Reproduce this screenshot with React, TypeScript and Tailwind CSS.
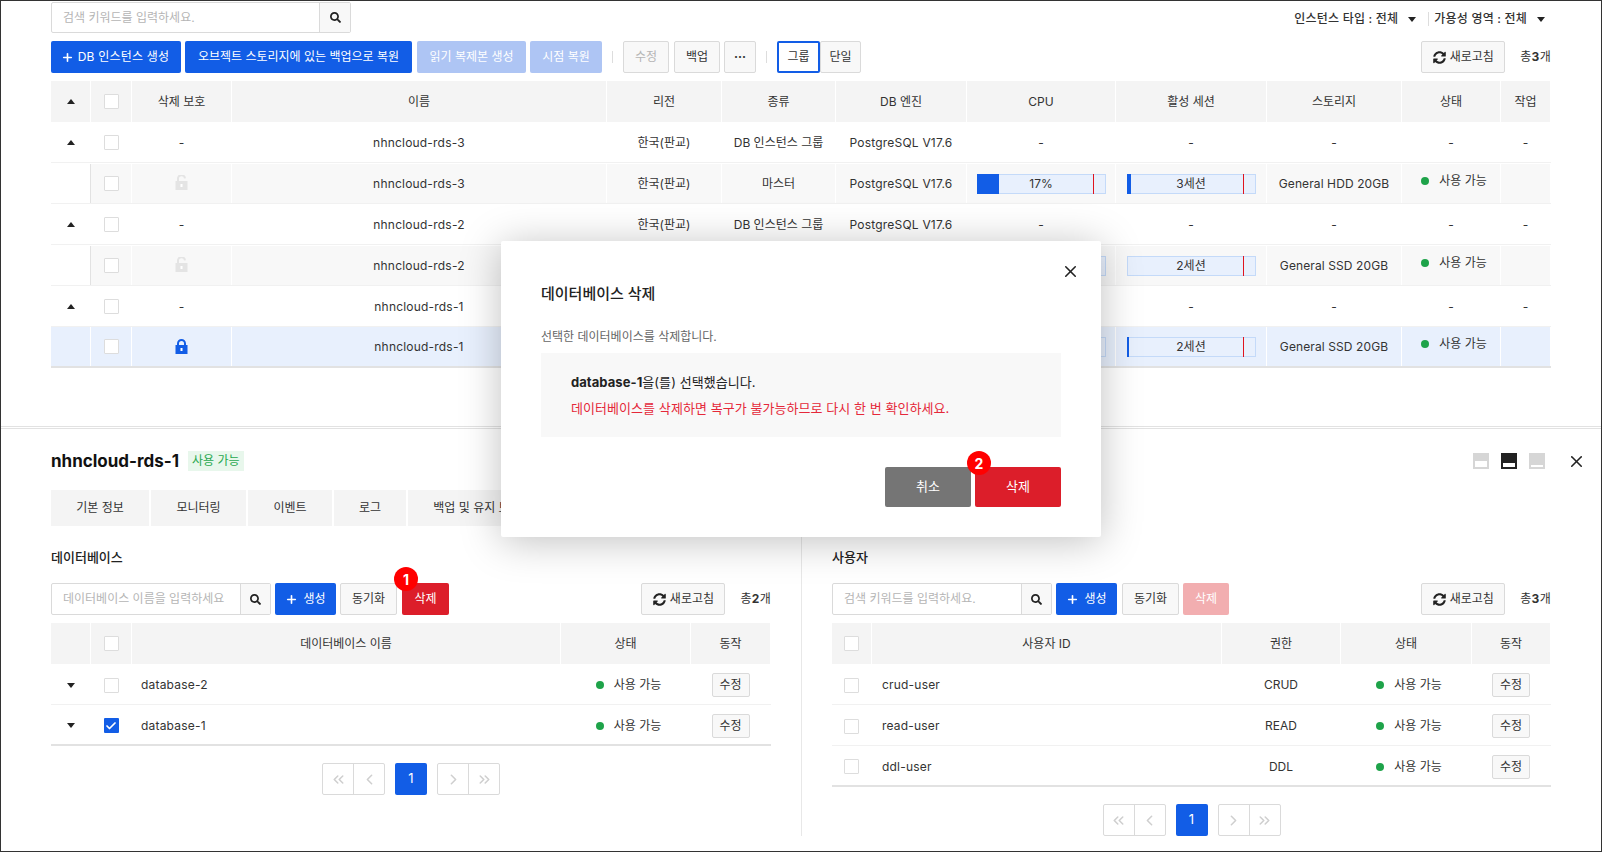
import { ChevronLeft, ChevronRight, ChevronsLeft, ChevronsRight, Check, X, Plus } from "lucide-react";
import { FaSearch, FaSyncAlt } from "react-icons/fa";

const TOP_COLS = "grid grid-cols-[40px_41px_100px_375px_115px_114px_131px_149px_151px_135px_99px_50px]";
const LEFT_COLS = "grid grid-cols-[40px_41px_429px_130px_80px]";
const RIGHT_COLS = "grid grid-cols-[40px_350px_119px_131px_79px]";

function Tri({ down = false }: { down?: boolean }) {
  return (
    <svg width="8" height="5" viewBox="0 0 8 5" className={down ? "rotate-180" : ""}>
      <path d="M4 0L8 5H0Z" fill="#222" />
    </svg>
  );
}

function Box({ checked = false }: { checked?: boolean }) {
  if (checked) {
    return (
      <span className="flex h-[15px] w-[15px] items-center justify-center rounded-[1px] bg-[#125de6] text-white">
        <Check size={12} strokeWidth={3.5} />
      </span>
    );
  }
  return <span className="block h-[15px] w-[15px] rounded-[1px] border border-[#dddddd] bg-white" />;
}

function Lock({ open = false }: { open?: boolean }) {
  const color = open ? "#e4e4e4" : "#125de6";
  return (
    <svg width="13" height="15" viewBox="0 0 13 15" className={open ? "mb-[2px]" : ""}>
      {open ? (
        <path d="M3 6.5V4a3.5 3.5 0 0 1 7-.6" fill="none" stroke={color} strokeWidth="2" />
      ) : (
        <path d="M3 6.5V4.5a3.5 3.5 0 0 1 7 0v2" fill="none" stroke={color} strokeWidth="2" />
      )}
      <rect x="0.5" y="6" width="12" height="9" fill={color} />
      <rect x="5.5" y="9" width="2" height="3" fill="#fff" />
    </svg>
  );
}

function Btn({
  children,
  className = "",
}: {
  children: React.ReactNode;
  className?: string;
}) {
  return (
    <div
      className={
        "relative flex h-[32px] items-center justify-center rounded-[2px] border border-[#dadada] bg-[#f8f8f8] text-[12px] text-[#333] " +
        className
      }
    >
      {children}
    </div>
  );
}

function Primary({
  children,
  className = "",
}: {
  children: React.ReactNode;
  className?: string;
}) {
  return (
    <div
      className={
        "relative flex h-[32px] items-center justify-center rounded-[2px] text-[12px] text-white " + className
      }
    >
      {children}
    </div>
  );
}

function Num({ n }: { n: number }) {
  return (
    <span className="absolute left-[-8px] top-[-16px] flex h-[24px] w-[24px] items-center justify-center rounded-full bg-[#ff0000] text-[14px] font-bold text-white">
      {n}
    </span>
  );
}

function SearchBox({ placeholder, width, inputWidth }: { placeholder: string; width: string; inputWidth: string }) {
  return (
    <div className={"flex rounded-[2px] border border-[#dadada] bg-white " + width}>
      <div className={"flex items-center pl-[11px] text-[12px] text-[#b5b5b5] " + inputWidth}>{placeholder}</div>
      <div className="flex flex-1 items-center justify-center border-l border-[#dadada] bg-[#f8f8f8] text-[#222]">
        <FaSearch size={11} />
      </div>
    </div>
  );
}

function Refresh() {
  return (
    <Btn className="w-[84px]">
      <FaSyncAlt size={13} className="mr-[4px] text-[#222]" />
      새로고침
    </Btn>
  );
}

function Total({ n }: { n: number }) {
  return (
    <div className="text-[12px] tracking-[0.3px] text-[#333]">
      총<b className="font-bold">{n}</b>개
    </div>
  );
}

function Bar({ label, fill, mark }: { label?: string; fill: number; mark: number }) {
  return (
    <div className="relative flex h-[20px] w-[129px] items-center justify-center border border-[#c4daf9] bg-[#e8f0fd] text-[12px] text-[#333]">
      <span className="absolute bottom-[-1px] left-[-1px] top-[-1px] bg-[#125de6]" style={{ width: fill }} />
      <span className="absolute bottom-[-1px] top-[-1px] w-px bg-[#e0141e]" style={{ left: mark }} />
      <span className="relative">{label}</span>
    </div>
  );
}

function Status({ up = false }: { up?: boolean }) {
  return (
    <div className={"ml-[6px] flex items-center gap-[10px] text-[12px] text-[#333] " + (up ? "mb-[5px]" : "")}>
      <span className="h-[8px] w-[8px] rounded-full bg-[#1ea34a]" />
      사용 가능
    </div>
  );
}

function Cell({ children, className = "" }: { children?: React.ReactNode; className?: string }) {
  return <div className={"flex items-center justify-center border-r border-white " + className}>{children}</div>;
}

function Head({ cols, labels }: { cols: string; labels: React.ReactNode[] }) {
  return (
    <div className={cols + " h-[41px] bg-[#f4f4f4] text-[12px] text-[#333]"}>
      {labels.map((l, i) => (
        <Cell key={i}>{l}</Cell>
      ))}
    </div>
  );
}

// covered: the cells that sit behind the dialog stay empty
function GroupRow({ name, covered = false }: { name: string; covered?: boolean }) {
  return (
    <div className={TOP_COLS + " h-[41px] border-b border-[#f1f1f1] pt-px text-[12px] text-[#333]"}>
      <Cell><Tri /></Cell>
      <Cell><Box /></Cell>
      <Cell>-</Cell>
      <Cell className="tracking-[0.2px]">{name}</Cell>
      <Cell>{!covered && "한국(판교)"}</Cell>
      <Cell>{!covered && "DB 인스턴스 그룹"}</Cell>
      <Cell className="tracking-[0.2px]">{!covered && "PostgreSQL V17.6"}</Cell>
      <Cell>{!covered && "-"}</Cell>
      <Cell>-</Cell>
      <Cell>-</Cell>
      <Cell>-</Cell>
      <Cell>-</Cell>
    </div>
  );
}

function MasterRow({
  name,
  cpu,
  cpuFill,
  session,
  sessionFill,
  storage,
  covered = false,
  selected = false,
}: {
  name: string;
  cpu?: string;
  cpuFill: number;
  session: string;
  sessionFill: number;
  storage: string;
  covered?: boolean;
  selected?: boolean;
}) {
  const bg = selected ? "bg-[#e8f0fd]" : "bg-[#f8f8f8]";
  return (
    <div
      className={
        TOP_COLS +
        " h-[41px] text-[12px] text-[#333] " +
        (selected ? "border-b-2 border-[#e2e2e2] bg-[#e8f0fd]" : "border-b border-[#f1f1f1] pt-px")
      }
    >
      <Cell className={selected ? bg + " border-r-white" : "border-r-[#e2e2e2] bg-white"} />
      <Cell className={bg}><Box /></Cell>
      <Cell className={bg}><Lock open={!selected} /></Cell>
      <Cell className={bg + " tracking-[0.2px]"}>{name}</Cell>
      <Cell className={bg}>{!covered && "한국(판교)"}</Cell>
      <Cell className={bg}>{!covered && "마스터"}</Cell>
      <Cell className={bg + " tracking-[0.2px]"}>{!covered && "PostgreSQL V17.6"}</Cell>
      <Cell className={bg}><Bar label={cpu} fill={cpuFill} mark={115} /></Cell>
      <Cell className={bg}><Bar label={session} fill={sessionFill} mark={115} /></Cell>
      <Cell className={bg + " tracking-[0.1px]"}>{storage}</Cell>
      <Cell className={bg}><Status up /></Cell>
      <Cell className={bg} />
    </div>
  );
}

function EditBtn() {
  return (
    <div className="flex h-[24px] w-[38px] items-center justify-center rounded-[2px] border border-[#dadada] bg-[#f8f8f8] text-[12px] text-[#333]">
      수정
    </div>
  );
}

function Pager() {
  const cell = "flex h-[30px] items-center justify-center text-[#cfcfcf]";
  return (
    <div className="mt-[17px] flex justify-center gap-[10px]">
      <div className="flex rounded-[2px] border border-[#dadada] bg-white">
        <div className={cell + " w-[31px] border-r border-[#dadada]"}><ChevronsLeft size={17} strokeWidth={2.2} /></div>
        <div className={cell + " w-[30px]"}><ChevronLeft size={17} strokeWidth={2.2} /></div>
      </div>
      <div className="flex h-[32px] w-[32px] items-center justify-center rounded-[2px] bg-[#125de6] text-[13px] text-white">1</div>
      <div className="flex rounded-[2px] border border-[#dadada] bg-white">
        <div className={cell + " w-[31px] border-r border-[#dadada]"}><ChevronRight size={17} strokeWidth={2.2} /></div>
        <div className={cell + " w-[30px]"}><ChevronsRight size={17} strokeWidth={2.2} /></div>
      </div>
    </div>
  );
}

function Sep() {
  return <span className="mx-[10px] h-[12px] w-px bg-[#dddddd]" />;
}

function PanelIcon({ barHeight, active = false }: { barHeight: string; active?: boolean }) {
  return (
    <div className={"flex h-[16px] w-[16px] flex-col justify-end px-[2px] pb-[2px] " + (active ? "bg-[#222]" : "bg-[#d6d6d6]")}>
      <span className={"block bg-white " + barHeight} />
    </div>
  );
}

export default function App() {
  return (
    <div className="relative h-[852px] w-[1602px] overflow-hidden border border-[#333] bg-white font-[family-name:Inter,'Noto_Sans_CJK_KR',sans-serif]">
      {/* top list */}
      <div className="h-[425px] px-[50px] pt-px">
        <div className="flex h-[31px] items-start justify-between">
          <SearchBox placeholder="검색 키워드를 입력하세요." width="h-[31px] w-[300px]" inputWidth="w-[267px]" />
          <div className="mr-[6px] mt-[8px] flex items-center text-[12px] font-medium tracking-[0.2px] text-[#333]">
            <span>인스턴스 타입 : 전체</span>
            <span className="ml-[10px]"><Tri down /></span>
            <span className="ml-[12px] mr-[5px] h-[14px] w-px bg-[#dddddd]" />
            <span>가용성 영역 : 전체</span>
            <span className="ml-[10px]"><Tri down /></span>
          </div>
        </div>

        <div className="mt-[8px] flex items-center">
          <Primary className="w-[130px] bg-[#125de6] pr-[2px] tracking-[0.2px]">
            <Plus size={13} strokeWidth={3} className="mr-[4px]" />
            DB 인스턴스 생성
          </Primary>
          <Primary className="ml-[4px] w-[227px] bg-[#125de6]">오브젝트 스토리지에 있는 백업으로 복원</Primary>
          <Primary className="ml-[5px] w-[109px] bg-[#aec5f4]">읽기 복제본 생성</Primary>
          <Primary className="ml-[4px] w-[72px] bg-[#aec5f4]">시점 복원</Primary>
          <Sep />
          <Btn className="w-[46px] text-[#b5b5b5]">수정</Btn>
          <Btn className="ml-[5px] w-[46px]">백업</Btn>
          <Btn className="ml-[4px] w-[32px] font-bold">···</Btn>
          <Sep />
          <div className="flex h-[32px] w-[43px] items-center justify-center rounded-[2px] border-2 border-[#125de6] bg-white text-[12px] text-[#333]">
            그룹
          </div>
          <Btn className="w-[41px]">단일</Btn>
          <div className="ml-auto flex items-center gap-[15px]">
            <Refresh />
            <Total n={3} />
          </div>
        </div>

        <div className="mt-[8px] w-[1500px]">
          <Head
            cols={TOP_COLS}
            labels={[<Tri />, <Box />, "삭제 보호", "이름", "리전", "종류", "DB 엔진", "CPU", "활성 세션", "스토리지", "상태", "작업"]}
          />
          <GroupRow name="nhncloud-rds-3" />
          <MasterRow name="nhncloud-rds-3" cpu="17%" cpuFill={22} session="3세션" sessionFill={4} storage="General HDD 20GB" />
          <GroupRow name="nhncloud-rds-2" />
          <MasterRow name="nhncloud-rds-2" cpuFill={3} session="2세션" sessionFill={0} storage="General SSD 20GB" covered />
          <GroupRow name="nhncloud-rds-1" covered />
          <MasterRow name="nhncloud-rds-1" cpuFill={3} session="2세션" sessionFill={2} storage="General SSD 20GB" covered selected />
        </div>
      </div>

      <div className="h-[3px] border-y border-[#e2e2e2]" />

      {/* detail panel */}
      <div className="px-[50px]">
        <div className="flex h-[61px] items-start pt-[22px]">
          <h1 className="text-[17px] font-bold leading-[20px] text-[#111]">nhncloud-rds-1</h1>
          <span className="ml-[9px] flex h-[20px] items-center bg-[#e8f7ec] px-[4px] text-[12px] text-[#27a84f]">사용 가능</span>
          <div className="ml-auto mr-[-35px] flex h-[20px] items-center">
            <PanelIcon barHeight="h-[6px]" />
            <span className="ml-[12px]"><PanelIcon barHeight="h-[4px]" active /></span>
            <span className="ml-[12px]"><PanelIcon barHeight="h-[2px]" /></span>
            <X size={19} strokeWidth={2} className="ml-[22px] text-[#222]" />
          </div>
        </div>

        <div className="flex h-[36px] gap-[2px] text-[12px] text-[#333]">
          <div className="flex w-[98px] items-center justify-center bg-[#f4f4f4]">기본 정보</div>
          <div className="flex w-[95px] items-center justify-center bg-[#f4f4f4]">모니터링</div>
          <div className="flex w-[84px] items-center justify-center bg-[#f4f4f4]">이벤트</div>
          <div className="flex w-[72px] items-center justify-center bg-[#f4f4f4]">로그</div>
          <div className="flex w-[138px] items-center justify-center bg-[#f4f4f4]">백업 및 유지 보수</div>
        </div>

        <div className="flex">
          <section className="w-[720px] pt-[21px]">
            <h2 className="text-[13px] font-medium leading-[20px] text-[#222]">데이터베이스</h2>
            <div className="mt-[16px] flex items-center">
              <SearchBox placeholder="데이터베이스 이름을 입력하세요" width="h-[32px] w-[220px]" inputWidth="w-[188px]" />
              <Primary className="ml-[4px] w-[61px] bg-[#125de6]">
                <Plus size={13} strokeWidth={3} className="mr-[5px]" />
                생성
              </Primary>
              <Btn className="ml-[4px] w-[57px]">동기화</Btn>
              <Primary className="ml-[5px] w-[47px] bg-[#dc1e2a]">
                삭제
                <Num n={1} />
              </Primary>
              <div className="ml-auto flex items-center gap-[15px]">
                <Refresh />
                <Total n={2} />
              </div>
            </div>
            <div className="mt-[8px]">
              <Head cols={LEFT_COLS} labels={["", <Box />, "데이터베이스 이름", "상태", "동작"]} />
              {[
                { name: "database-2", checked: false },
                { name: "database-1", checked: true },
              ].map((r, i) => (
                <div
                  key={r.name}
                  className={
                    LEFT_COLS +
                    " h-[41px] pt-[2px] text-[12px] text-[#333] " +
                    (i === 1 ? "border-b-2 border-[#e2e2e2]" : "border-b border-[#f1f1f1]")
                  }
                >
                  <Cell><Tri down /></Cell>
                  <Cell><Box checked={r.checked} /></Cell>
                  <div className="flex items-center pl-[9px] tracking-[0.2px]">{r.name}</div>
                  <Cell><Status /></Cell>
                  <Cell><EditBtn /></Cell>
                </div>
              ))}
            </div>
            <Pager />
          </section>

          <div className="mx-[30px] h-[310px] w-px bg-[#e8e8e8]" />

          <section className="w-[719px] pt-[21px]">
            <h2 className="text-[13px] font-medium leading-[20px] text-[#222]">사용자</h2>
            <div className="mt-[16px] flex items-center">
              <SearchBox placeholder="검색 키워드를 입력하세요." width="h-[32px] w-[220px]" inputWidth="w-[188px]" />
              <Primary className="ml-[4px] w-[61px] bg-[#125de6]">
                <Plus size={13} strokeWidth={3} className="mr-[5px]" />
                생성
              </Primary>
              <Btn className="ml-[5px] w-[57px]">동기화</Btn>
              <Primary className="ml-[4px] w-[46px] bg-[#f2aeb0]">삭제</Primary>
              <div className="ml-auto flex items-center gap-[15px]">
                <Refresh />
                <Total n={3} />
              </div>
            </div>
            <div className="mt-[8px]">
              <Head cols={RIGHT_COLS} labels={[<Box />, "사용자 ID", "권한", "상태", "동작"]} />
              {[
                { name: "crud-user", role: "CRUD" },
                { name: "read-user", role: "READ" },
                { name: "ddl-user", role: "DDL" },
              ].map((r, i) => (
                <div
                  key={r.name}
                  className={
                    RIGHT_COLS +
                    " h-[41px] pt-[2px] text-[12px] text-[#333] " +
                    (i === 2 ? "border-b-2 border-[#e2e2e2]" : "border-b border-[#f1f1f1]")
                  }
                >
                  <Cell><Box /></Cell>
                  <div className="flex items-center pl-[10px] tracking-[0.2px]">{r.name}</div>
                  <Cell>{r.role}</Cell>
                  <Cell><Status /></Cell>
                  <Cell><EditBtn /></Cell>
                </div>
              ))}
            </div>
            <Pager />
          </section>
        </div>
      </div>

      {/* delete dialog */}
      <div className="absolute left-[500px] top-[240px] h-[296px] w-[600px] rounded-[2px] bg-white px-[40px] shadow-[0_4px_40px_rgba(0,0,0,0.25)]">
        <X size={19} strokeWidth={2} className="absolute right-[21px] top-[21px] text-[#222]" />
        <h3 className="pt-[42px] text-[15px] font-medium leading-[22px] text-[#222]">데이터베이스 삭제</h3>
        <p className="mt-[23px] text-[12px] leading-[18px] text-[#666]">선택한 데이터베이스를 삭제합니다.</p>
        <div className="mt-[7px] h-[84px] bg-[#f8f8f8] px-[30px] pt-[16px] text-[13px] leading-[26px] tracking-[0.06px]">
          <p className="text-[#222]">
            <b className="font-bold">database-1</b>을(를) 선택했습니다.
          </p>
          <p className="text-[#e5283a]">데이터베이스를 삭제하면 복구가 불가능하므로 다시 한 번 확인하세요.</p>
        </div>
        <div className="mt-[30px] flex justify-end gap-[4px] text-[13px] text-white">
          <div className="flex h-[40px] w-[86px] items-center justify-center rounded-[2px] bg-[#757575]">취소</div>
          <div className="relative flex h-[40px] w-[86px] items-center justify-center rounded-[2px] bg-[#dc1e2a]">
            삭제
            <Num n={2} />
          </div>
        </div>
      </div>
    </div>
  );
}
